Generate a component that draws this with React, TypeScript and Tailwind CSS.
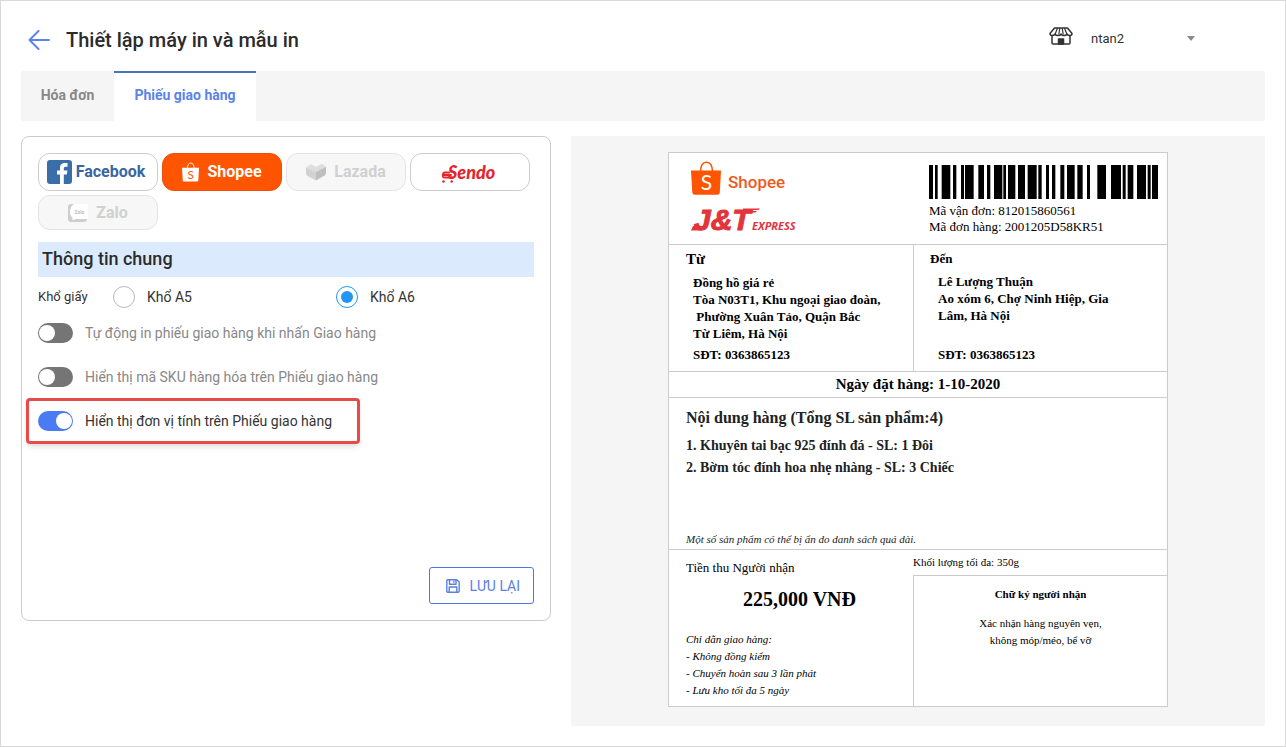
import { useState } from "react";
import type { ReactNode } from "react";

const ROBOTO = "font-[Roboto,'Noto_Sans',sans-serif]";
const SERIF = "font-['Liberation_Serif','Times_New_Roman',serif]";

// [x, width] of each bar, in thirds of a pixel
const BARS = [
  [0, 12], [18, 8], [38, 26], [72, 10], [96, 9], [108, 26], [148, 17], [174, 10],
  [195, 25], [223, 8], [237, 22], [267, 21], [296, 27], [328, 10], [351, 9],
  [369, 10], [394, 12], [414, 23], [445, 16], [474, 9], [505, 26], [546, 30],
  [581, 9], [596, 17], [624, 27], [656, 9], [669, 18],
];

function ShopeeBag({ className, bag, letter }: { className: string; bag: string; letter: string }) {
  return (
    <svg viewBox="0 0 30 34" className={className} aria-hidden="true">
      <path d="M9.5 11C9.5 4.5 12 1.2 15.5 1.2S21.5 4.5 21.5 11" fill="none" stroke={bag} strokeWidth="1.6" />
      <path d="M0 9.5h30l-1.2 22q-.2 2.300-2.500 2.300h-22.500q-2.300 0-2.500-2.300z" fill={bag} />
      <text x="15.5" y="28.5" textAnchor="middle" fontSize="21" fill={letter} fontFamily="Lato, sans-serif" fontWeight="400">
        S
      </text>
    </svg>
  );
}

function FacebookIcon() {
  return (
    <svg viewBox="0 0 25 24" className="h-6 w-[25px]" aria-hidden="true">
      <rect width="25" height="24" rx="3" fill="#3a6ea8" />
      <path d="M13 24v-9.500H10v-4h3V8c0-3.600 2-5 5-5h2.500v3.700h-1.800c-1.500 0-1.900.7-1.900 2v1.800h3.600l-.5 4h-3.100V24z" fill="#fff" />
    </svg>
  );
}

function LazadaIcon() {
  return (
    <svg viewBox="0 0 20 18" className="h-[18px] w-5" aria-hidden="true">
      <path d="M0 4.5 5 1.2l5 2.500L16 .8l4 3-10 5.400z" fill="#dedede" />
      <path d="M0 4.5 10 9v8.500L1.500 13Q0 12 0 10z" fill="#d2d2d2" />
      <path d="M20 3.800 10 9v8.500l8.500-5Q20 11.500 20 9.500z" fill="#bfbfbf" />
    </svg>
  );
}

function ZaloIcon() {
  return (
    <svg viewBox="0 0 20 20" className="h-5 w-5" aria-hidden="true">
      <rect y="1" width="19" height="18" rx="3" fill="#cecece" />
      <path d="M6 1h14v15H8q-2 1-4 .5.700-.8.500-1.800C1 12 1 4 6 1z" fill="#fff" />
      <text x="11.5" y="11" textAnchor="middle" fontSize="5" fill="#c0c0c0" fontFamily="Roboto, sans-serif" fontWeight="700">
        Zalo
      </text>
    </svg>
  );
}

function SendoLogo() {
  return (
    <svg viewBox="0 0 60 24" className="h-6 w-[60px]" aria-hidden="true">
      <g fill="none" stroke="#e4252c" strokeWidth="1.800" strokeLinecap="round">
        <path d="M9.500 12.500H5Q2.500 12.800 3 15h8" />
        <path d="M2.800 15q-.5 2.500 2 2.500h8" />
      </g>
      <circle cx="3.500" cy="21.500" r="1.300" fill="#e4252c" />
      <circle cx="11.700" cy="21.500" r="1.300" fill="#e4252c" />
      <text x="8" y="19" fontSize="18" fill="#e4252c" fontFamily="Lato, sans-serif" fontWeight="900" fontStyle="italic">
        Sendo
      </text>
    </svg>
  );
}

function StoreIcon() {
  return (
    <svg viewBox="0 0 24 18" className="h-[18px] w-6" fill="none" stroke="#333" strokeWidth="1.500" strokeLinejoin="round" aria-hidden="true">
      <path d="M5.500 1h13L23 6.500q0 2-2 2t-3-1.500q-1 1.500-3 1.500t-3-1.500q-1 1.500-3 1.500T6 7Q5 8.500 3 8.500t-2-2z" />
      <path d="M8.500 1 6.200 7M10.800 1 9.800 7.500M13.200 1l1 6.500M15.500 1l2.300 6" strokeWidth="1.200" />
      <path d="M3 8.500V16q0 1 1 1h16q1 0 1-1V8.500" />
      <path d="M9.500 17v-5h5v5z" fill="#333" />
    </svg>
  );
}

function SaveIcon() {
  return (
    <svg viewBox="0 0 14 14" className="h-[14px] w-[14px]" fill="none" stroke="currentColor" strokeWidth="1.400" strokeLinejoin="round" aria-hidden="true">
      <path d="M2 .8h8.800L13.200 3v9q0 1.200-1.200 1.200H2Q.8 13.200.8 12V2Q.8.800 2 .8z" />
      <path d="M3.500.8v4.500h6.500V.8M7.800 1.800v2M3.200 13V8h7.600v5" />
    </svg>
  );
}

function ChannelButton({ className, disabled, children }: { className: string; disabled?: boolean; children: ReactNode }) {
  return (
    <button
      type="button"
      disabled={disabled}
      className={`flex w-[120px] items-center justify-center rounded-xl border text-base font-bold ${className}`}
    >
      {children}
    </button>
  );
}

interface ToggleProps {
  id: string;
  label: string;
  checked: boolean;
  onChange: (checked: boolean) => void;
}

function Toggle({ id, label, checked, onChange }: ToggleProps) {
  return (
    <div className="flex items-center gap-3">
      <input
        id={id}
        type="checkbox"
        role="switch"
        checked={checked}
        onChange={(e) => onChange(e.target.checked)}
        className="flex h-5 w-[35px] appearance-none items-center rounded-full bg-[#757575] px-px before:h-4 before:w-4 before:rounded-full before:bg-white checked:justify-end checked:bg-[#4a7bf3]"
      />
      <label htmlFor={id} className={checked ? "text-[#333]" : "text-[#888]"}>
        {label}
      </label>
    </div>
  );
}

function PaperRadio({ id, label, checked, onChange }: { id: string; label: string; checked: boolean; onChange: () => void }) {
  return (
    <div className="flex items-center gap-3">
      <input
        id={id}
        type="radio"
        name="paper"
        checked={checked}
        onChange={onChange}
        className="grid h-[22px] w-[22px] appearance-none place-items-center rounded-full border border-[#bbb] checked:border-[#2196f3] checked:before:h-3 checked:before:w-3 checked:before:rounded-full checked:before:bg-[#2196f3]"
      />
      <label htmlFor={id}>{label}</label>
    </div>
  );
}

function SettingsCard() {
  const [paper, setPaper] = useState("A6");
  const [autoPrint, setAutoPrint] = useState(false);
  const [showSku, setShowSku] = useState(false);
  const [showUnit, setShowUnit] = useState(true);

  return (
    <section className="flex min-h-[485px] w-[530px] shrink-0 flex-col rounded-lg border border-[#ccc] p-4">
      <div className="flex flex-wrap gap-1">
        <ChannelButton className="h-[38px] gap-1 border-[#ccc] pr-1 text-[#3a669f]">
          <FacebookIcon />
          Facebook
        </ChannelButton>
        <ChannelButton className="h-[38px] gap-2 border-[#e9510c] bg-[#ff5500] text-white">
          <ShopeeBag className="h-5 w-[17px]" bag="#fff" letter="#ff5500" />
          Shopee
        </ChannelButton>
        <ChannelButton disabled className="h-[38px] gap-2 border-[#e4e4e4] bg-[#f7f7f7] text-[#d0d0d0]">
          <LazadaIcon />
          Lazada
        </ChannelButton>
        <ChannelButton className="h-[38px] border-[#ccc]">
          <SendoLogo />
        </ChannelButton>
        <ChannelButton disabled className="h-[35px] gap-2 border-[#e4e4e4] bg-[#f7f7f7] text-[#d0d0d0]">
          <ZaloIcon />
          Zalo
        </ChannelButton>
      </div>

      <h2 className="mt-3 bg-[#dbebfd] px-1 pb-[2px] text-lg leading-[33px] font-medium text-[#2b2b2b]">Thông tin chung</h2>

      <div className="mt-[9px] grid grid-cols-[75px_223px_auto] items-center">
        <span className="text-[13px]">Khổ giấy</span>
        <PaperRadio id="paper-a5" label="Khổ A5" checked={paper === "A5"} onChange={() => setPaper("A5")} />
        <PaperRadio id="paper-a6" label="Khổ A6" checked={paper === "A6"} onChange={() => setPaper("A6")} />
      </div>

      <div className="mt-[15px] flex flex-col gap-6">
        <Toggle
          id="auto-print"
          label="Tự động in phiếu giao hàng khi nhấn Giao hàng"
          checked={autoPrint}
          onChange={setAutoPrint}
        />
        <Toggle id="show-sku" label="Hiển thị mã SKU hàng hóa trên Phiếu giao hàng" checked={showSku} onChange={setShowSku} />
        <div className="relative">
          <Toggle id="show-unit" label="Hiển thị đơn vị tính trên Phiếu giao hàng" checked={showUnit} onChange={setShowUnit} />
          {/* Highlight frame */}
          <div className="pointer-events-none absolute -inset-y-[13px] -left-3 w-[334px] rounded-sm border-3 border-[#e84a4a] shadow-md"></div>
        </div>
      </div>

      <button
        type="button"
        className="mt-auto flex h-[37px] items-center gap-[10px] self-end rounded-[3px] border border-[#4a7bd8] pr-[13px] pl-4 text-[#5b80dc]"
      >
        <SaveIcon />
        LƯU LẠI
      </button>
    </section>
  );
}

function DeliveryNote() {
  return (
    <article className={`w-[500px] border border-[#ccc] bg-white text-black ${SERIF}`}>
      {/* Logos and barcode */}
      <div className="flex h-[91px]">
        <div className="flex w-[260px] flex-col gap-2 pt-2 pl-[22px]">
          <div className={`flex items-end gap-[7px] text-[17px] font-medium text-[#ee5a1c] ${ROBOTO}`}>
            <ShopeeBag className="h-[34px] w-[30px]" bag="#ff5500" letter="#fff" />
            <span className="leading-[26px]">Shopee</span>
          </div>
          <svg viewBox="0 0 116 32" className="h-8 w-[116px] overflow-visible" role="img" aria-label="J&T Express">
            <g fill="#e3343c">
              <text x="3" y="27" fontSize="30" stroke="#e3343c" strokeWidth="1" fontFamily="'Liberation Sans', sans-serif" fontWeight="700" fontStyle="italic">
                J&amp;T
              </text>
              <path d="M2 23h10l-1 4.500H0zM52 5.500h17l-1.500 1.500H52zM52 8h14l-1.500 1.500H52z" />
              <text x="61" y="27" fontSize="11" fontFamily="'Open Sans', sans-serif" fontWeight="700" fontStyle="italic">
                EXPRESS
              </text>
            </g>
          </svg>
        </div>
        <div className="pt-3 text-[13px] leading-4">
          <svg viewBox="0 0 687 34" preserveAspectRatio="none" className="mb-1 h-[34px] w-[229px]" role="img" aria-label="812015860561">
            {BARS.map(([x, width]) => (
              <rect key={x} x={x} y="0" width={width} height="34" />
            ))}
          </svg>
          <p>Mã vận đơn: 812015860561</p>
          <p>Mã đơn hàng: 2001205D58KR51</p>
        </div>
      </div>

      {/* Sender and receiver */}
      <div className="flex h-[127px] border-t border-[#ccc] text-[13px] leading-[17px] font-bold">
        <div className="w-[244px] px-[17px] pt-1">
          <h3 className="text-[15px] leading-5">Từ</h3>
          <div className="pt-[5px] pl-[7px]">
            <p>Đồng hồ giá rẻ</p>
            <p>Tòa N03T1, Khu ngoại giao đoàn,</p>
            <p className="whitespace-pre"> Phường Xuân Tảo, Quận Bắc</p>
            <p>Từ Liêm, Hà Nội</p>
            <p className="pt-1">SĐT: 0363865123</p>
          </div>
        </div>
        <div className="flex-1 border-l border-[#ccc] px-4 pt-1">
          <h3 className="leading-5">Đến</h3>
          <div className="flex h-[94px] flex-col pt-1 pl-2">
            <p>Lê Lượng Thuận</p>
            <p>Ao xóm 6, Chợ Ninh Hiệp, Gia</p>
            <p>Lâm, Hà Nội</p>
            <p className="mt-auto">SĐT: 0363865123</p>
          </div>
        </div>
      </div>

      <p className="border-t border-[#ccc] text-center text-[15px] leading-[25px] font-bold">Ngày đặt hàng: 1-10-2020</p>

      {/* Goods */}
      <div className="flex h-[152px] flex-col border-t border-[#ccc] px-[17px] pt-2 text-[#222]">
        <h3 className="text-base font-bold">Nội dung hàng (Tổng SL sản phẩm:4)</h3>
        <ol className="pt-[5px] text-sm leading-[22px] font-bold">
          <li>1. Khuyên tai bạc 925 đính đá - SL: 1 Đôi</li>
          <li>2. Bờm tóc đính hoa nhẹ nhàng - SL: 3 Chiếc</li>
        </ol>
        <p className="mt-auto text-[11px] leading-5 italic">Một số sản phẩm có thể bị ẩn do danh sách quá dài.</p>
      </div>

      {/* Amount and signature */}
      <div className="flex h-[157px] border-t border-[#ccc] text-[11px] leading-[17px]">
        <div className="flex w-[244px] flex-col px-[17px] pt-2 pb-[7px]">
          <p className="text-[13px] leading-5">Tiền thu Người nhận</p>
          <p className="pt-[7px] pl-[57px] text-xl font-bold">225,000 VNĐ</p>
          <div className="mt-auto italic">
            <p>Chỉ dẫn giao hàng:</p>
            <p>- Không đồng kiểm</p>
            <p>- Chuyển hoàn sau 3 lần phát</p>
            <p>- Lưu kho tối đa 5 ngày</p>
          </div>
        </div>
        <div className="flex flex-1 flex-col">
          <p className="leading-[25px]">Khối lượng tối đa: 350g</p>
          <div className="flex-1 border-t border-l border-[#ccc] pt-[10px] text-center">
            <p className="pb-3 font-bold">Chữ ký người nhận</p>
            <p>Xác nhận hàng nguyên vẹn,</p>
            <p>không móp/méo, bể vỡ</p>
          </div>
        </div>
      </div>
    </article>
  );
}

export default function App() {
  return (
    <div className={`min-h-screen border border-[#d9d9d9] bg-white px-5 pb-5 text-sm text-[#333] ${ROBOTO}`}>
      <header className="flex h-[70px] items-center pt-2">
        <button type="button" aria-label="Quay lại" className="px-[7px] text-[#5b83e8]">
          <svg viewBox="0 0 22 20" className="h-5 w-[22px]" fill="none" stroke="currentColor" strokeWidth="2" strokeLinecap="round" strokeLinejoin="round" aria-hidden="true">
            <path d="M21 10H1.500M10.500 1 1.500 10l9 9" />
          </svg>
        </button>
        <h1 className="pl-[9px] text-xl font-medium text-[#2b2b2b]">Thiết lập máy in và mẫu in</h1>
        <div className="mr-[70px] mb-2 ml-auto flex items-center">
          <StoreIcon />
          <div className="relative ml-[18px] pt-1">
            <select aria-label="Tài khoản" className="w-[104px] appearance-none bg-transparent text-[13px]">
              <option>ntan2</option>
            </select>
            <svg viewBox="0 0 8 5" className="pointer-events-none absolute top-3 right-0 h-[5px] w-2" aria-hidden="true">
              <path d="M0 0h8L4 5z" fill="#888" />
            </svg>
          </div>
        </div>
      </header>

      <nav className="flex h-[50px] rounded-xs bg-[#f5f5f5] font-bold">
        <button type="button" className="w-[93px] pb-[2px] text-[#888]">
          Hóa đơn
        </button>
        <button type="button" className="w-[142px] border-t-2 border-[#4a76b8] bg-white pb-1 text-[#5b83e8]">
          Phiếu giao hàng
        </button>
      </nav>

      <main className="mt-[15px] flex items-start gap-5">
        <SettingsCard />
        <section className="flex min-h-[590px] flex-1 justify-center rounded-xs bg-[#f5f5f5] pt-4">
          <div>
            <DeliveryNote />
          </div>
        </section>
      </main>
    </div>
  );
}
